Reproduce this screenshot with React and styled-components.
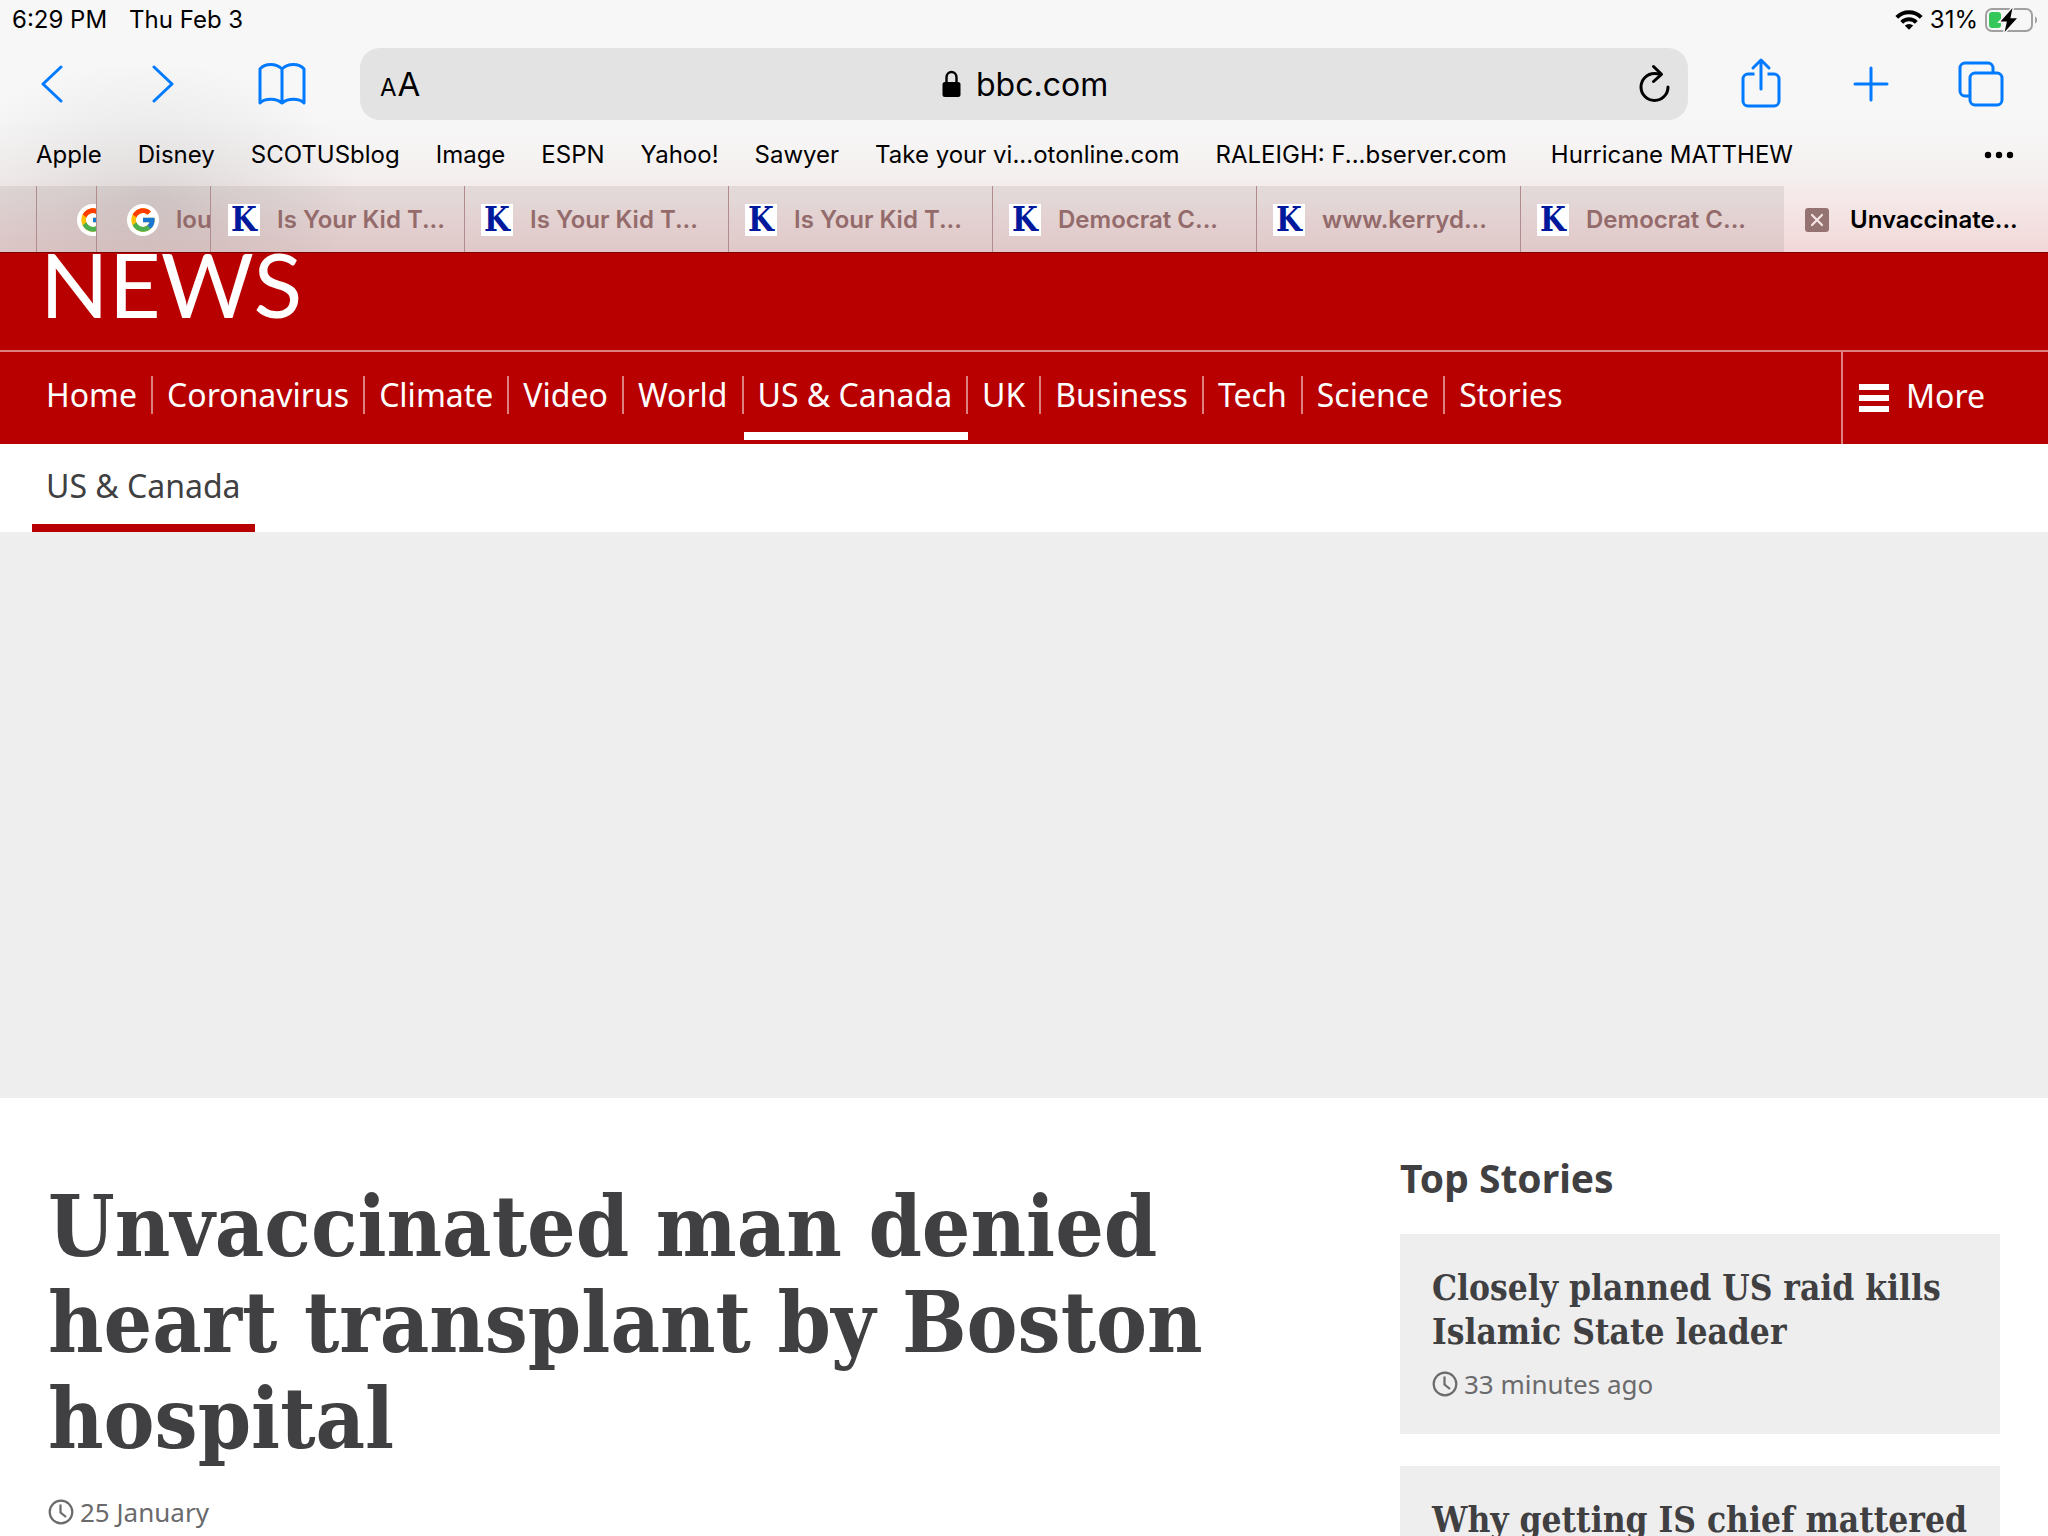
import styled, { createGlobalStyle } from "styled-components";
import { FcGoogle } from "react-icons/fc";

const GlobalStyle = createGlobalStyle`
  * {
    box-sizing: border-box;
  }
  body {
    margin: 0;
    overflow: hidden;
    background: #fff;
    font-family: "Noto Sans", sans-serif;
  }
  button {
    padding: 0;
    border: none;
    background: none;
    color: inherit;
    font: inherit;
    cursor: pointer;
  }
  a {
    color: inherit;
    text-decoration: none;
  }
  svg {
    display: block;
    flex: none;
  }
`;

const Screen = styled.div`
  display: flex;
  flex-direction: column;
  height: 100vh;
  overflow: hidden;
`;

/* ---------- browser chrome ---------- */

const Chrome = styled.header`
  flex: none;
  color: #000;
  font-family: Inter, sans-serif;
  font-size: 24px;
  line-height: 32px;
  background: radial-gradient(
      ellipse 210px 140px at 150px 200px,
      rgba(60, 60, 60, 0.12),
      rgba(60, 60, 60, 0)
    ),
    linear-gradient(
      #f7f7f7 0,
      #f7f7f7 120px,
      #f5f0f0 172px,
      #f5e8e8 200px,
      #f2d8d8 252px
    );
`;

const StatusBar = styled.div`
  display: flex;
  align-items: center;
  justify-content: space-between;
  height: 40px;
  padding: 0 9px 0 12px;
`;

const StatusGroup = styled.div`
  display: flex;
  align-items: center;
  gap: ${(p) => p.$gap}px;
`;

const Toolbar = styled.div`
  display: flex;
  align-items: center;
  padding-top: 8px;
`;

const ToolGroup = styled.div`
  display: flex;
  flex: none;
  padding: ${(p) => (p.$end ? "0 12px 0 18px" : "0 18px 0 0")};
`;

const ToolButton = styled.button`
  display: flex;
  align-items: center;
  justify-content: center;
  width: ${(p) => p.$width || 110}px;
  height: 72px;
  color: #007aff;
`;

const AddressBar = styled.div`
  display: grid;
  grid-template-columns: 1fr auto 1fr;
  align-items: center;
  flex: 1;
  min-width: 0;
  height: 72px;
  padding: 0 16px 0 20px;
  border-radius: 20px;
  background: #e3e3e3;
`;

const TextSizeButton = styled.button`
  display: flex;
  align-items: baseline;
  justify-self: start;
  gap: 1px;
  padding-top: 4px;
  line-height: 40px;
`;

const SmallA = styled.span`
  font-size: 24px;
`;

const LargeA = styled.span`
  font-size: 33px;
`;

const Address = styled.label`
  display: flex;
  align-items: center;
  gap: 15px;
`;

const AddressInput = styled.input`
  width: 134px;
  height: 44px;
  padding: 0;
  border: none;
  outline: none;
  background: none;
  color: #000;
  font-family: Inter, sans-serif;
  font-size: 32px;
`;

const ReloadButton = styled.button`
  justify-self: end;
`;

const Bookmarks = styled.nav`
  display: flex;
  align-items: center;
  height: 66px;
  padding: 4px 34px 0 36px;
`;

const Bookmark = styled.a`
  margin-right: ${(p) => (p.$wide ? 44 : 36)}px;
  white-space: nowrap;
`;

const MoreBookmarks = styled.button`
  margin-left: auto;
`;

const TabStrip = styled.div`
  display: flex;
  height: 66px;
`;

const TabItem = styled.button`
  display: flex;
  align-items: center;
  flex: ${(p) => (p.$width ? "none" : "1 1 264px")};
  width: ${(p) => (p.$width ? `${p.$width}px` : "auto")};
  min-width: 0;
  overflow: hidden;
  gap: ${(p) => (p.$active ? 21 : 17)}px;
  padding-top: 2px;
  padding-left: ${(p) => p.$pad}px;
  border-left: ${(p) => (p.$edge ? "none" : "1px solid #b08c8c")};
  background: ${(p) => (p.$active ? "transparent" : "rgba(60, 40, 40, 0.09)")};
  color: ${(p) => (p.$active ? "#000" : "#946b6b")};
  font-weight: 600;
  white-space: nowrap;
`;

const Favicon = styled.span`
  display: flex;
  align-items: center;
  justify-content: center;
  flex: none;
  width: 32px;
  height: 32px;
  border-radius: ${(p) => (p.$round ? "50%" : "0")};
  background: #fff;
  color: #00189c;
  font: 700 33px/32px "DejaVu Serif Condensed", "DejaVu Serif", serif;
`;

/* ---------- page ---------- */

const Masthead = styled.div`
  flex: none;
  padding: 0 40px;
  height: 98px;
  border-top: 1px solid #800000;
  background: #b80000;
`;

const Brand = styled.a`
  display: block;
  color: #fff;
  font: 400 90px/60px Lato, sans-serif;
`;

const NavBar = styled.nav`
  display: flex;
  flex: none;
  justify-content: space-between;
  height: 94px;
  padding-left: 32px;
  border-top: 2px solid #dc8080;
  background: #b80000;
  color: #fff;
  font-size: 32px;
`;

const NavList = styled.ul`
  display: flex;
  margin: 0;
  padding: 0;
  list-style: none;
`;

const NavLink = styled.a`
  display: block;
  height: 88px;
  padding-top: 24px;
  border-bottom: 8px solid ${(p) => (p.$active ? "#fff" : "transparent")};
`;

const NavLabel = styled.span`
  display: block;
  padding: 0 14px;
  border-right: ${(p) => (p.$last ? "none" : "2px solid #dc8080")};
  line-height: 38px;
  white-space: nowrap;
`;

const MoreButton = styled.button`
  display: flex;
  align-items: center;
  gap: 17px;
  width: 207px;
  padding-left: 16px;
  border-left: 2px solid #dc8080;
`;

const MoreLabel = styled.span`
  padding-bottom: 4px;
  line-height: 40px;
`;

const SubNav = styled.nav`
  display: flex;
  flex: none;
  padding-left: 32px;
`;

const SubNavLink = styled.a`
  padding: 4px 14px 0;
  border-bottom: 8px solid #b80000;
  color: #404042;
  font-size: 32px;
  line-height: 76px;
`;

const AdSlot = styled.div`
  flex: none;
  height: 566px;
  background: #eee;
`;

const Content = styled.main`
  display: grid;
  grid-template-columns: 1fr 600px;
  column-gap: 152px;
  padding: 0 48px;
  color: #404042;
`;

const Article = styled.article`
  padding-top: 80px;
`;

const Headline = styled.h1`
  margin: 0 0 30px;
  font: 700 85px/96px "DejaVu Serif Condensed", "DejaVu Serif", serif;
`;

const Time = styled.div`
  display: flex;
  align-items: center;
  gap: 6px;
  color: #6a6a6c;
  font-size: 26px;
  line-height: 32px;
`;

const Sidebar = styled.aside`
  display: flex;
  flex-direction: column;
  gap: 32px;
  padding-top: 56px;
`;

const SidebarTitle = styled.h2`
  margin: 0;
  font-size: 39px;
  line-height: 48px;
`;

const StoryCard = styled.a`
  display: block;
  padding: 32px 32px 34px;
  background: #eee;
`;

const StoryTitle = styled.h3`
  margin: 0 0 14px;
  font: 700 35px/44px "DejaVu Serif Condensed", "DejaVu Serif", serif;
`;

const bookmarks = [
  "Apple",
  "Disney",
  "SCOTUSblog",
  "Image",
  "ESPN",
  "Yahoo!",
  "Sawyer",
  "Take your vi...otonline.com",
  "RALEIGH: F...bserver.com",
  "Hurricane MATTHEW",
];

const tabs = [
  { width: 36, pad: 0, edge: true },
  { width: 60, pad: 40, icon: "google" },
  { width: 114, pad: 30, icon: "google", title: "lou" },
  { width: 254, pad: 17, icon: "k", title: "Is Your Kid T..." },
  { pad: 16, icon: "k", title: "Is Your Kid T..." },
  { pad: 16, icon: "k", title: "Is Your Kid T..." },
  { pad: 16, icon: "k", title: "Democrat C..." },
  { pad: 16, icon: "k", title: "www.kerryd..." },
  { pad: 16, icon: "k", title: "Democrat C..." },
  { pad: 21, active: true, edge: true, title: "Unvaccinate..." },
];

const sections = [
  "Home",
  "Coronavirus",
  "Climate",
  "Video",
  "World",
  "US & Canada",
  "UK",
  "Business",
  "Tech",
  "Science",
  "Stories",
];

const line = {
  fill: "none",
  stroke: "currentColor",
  strokeWidth: 3,
  strokeLinecap: "round",
  strokeLinejoin: "round",
};

function WifiIcon() {
  return (
    <svg width="28" height="20" viewBox="0 0 28 20" aria-hidden="true">
      <g fill="none" stroke="#000" strokeWidth="4">
        <path d="M1.8 7.4a17.3 17.3 0 0 1 24.4 0" />
        <path d="M6.7 12.4a10.3 10.3 0 0 1 14.6 0" />
      </g>
      <path d="M14 19.8 9.8 15.6a6 6 0 0 1 8.4 0z" />
    </svg>
  );
}

function BatteryIcon() {
  return (
    <svg width="54" height="26" viewBox="0 0 54 26" aria-hidden="true">
      <rect x="1" y="2" width="46" height="22" rx="6" fill="none" stroke="#a0a0a0" strokeWidth="2" />
      <path d="M50 9.5c2.8 1 2.8 6 0 7z" fill="#a0a0a0" />
      <rect x="4" y="5" width="12" height="16" rx="3" fill="#34c759" />
      <path
        d="M27.5 1 15.5 14.6h6.4L19.6 25 32 11.2h-6.6z"
        fill="#000"
        stroke="#f7f7f7"
        strokeWidth="3"
        paintOrder="stroke"
      />
    </svg>
  );
}

function BookIcon() {
  return (
    <svg width="48" height="44" viewBox="0 0 48 44" aria-hidden="true">
      <path {...line} d="M24 7C18 1 7 1 2 7V41c5-5 16-5 22 0 6-5 17-5 22 0V7C41 1 30 1 24 7V41" />
    </svg>
  );
}

function LockIcon() {
  return (
    <svg width="19" height="28" viewBox="0 0 19 28" aria-hidden="true">
      <path d="M4.5 14V7.5a5 5.5 0 0 1 10 0V14" fill="none" stroke="#000" strokeWidth="2.4" />
      <rect x="0.5" y="12" width="18" height="15" rx="2.5" />
    </svg>
  );
}

function ReloadIcon() {
  return (
    <svg width="34" height="40" viewBox="0 0 34 40" aria-hidden="true">
      <path {...line} d="M30 23a13.5 13.5 0 1 1-13.5-13.5c2 0 3.5.2 6 .8" />
      <path {...line} d="M15.5 2.5 23.5 10.3 15.5 17.5" />
    </svg>
  );
}

function ShareIcon() {
  return (
    <svg width="40" height="54" viewBox="0 0 40 54" aria-hidden="true">
      <path
        {...line}
        strokeLinecap="butt"
        d="M13.5 17H7a5 5 0 0 0-5 5v22a5 5 0 0 0 5 5h26a5 5 0 0 0 5-5V22a5 5 0 0 0-5-5h-6.5"
      />
      <path {...line} d="M20 32V4M12 11 20 3 28 11" />
    </svg>
  );
}

function TabsIcon() {
  return (
    <svg width="46" height="46" viewBox="0 0 46 46" aria-hidden="true">
      <path
        {...line}
        strokeLinecap="butt"
        d="M11.5 35H7a5 5 0 0 1-5-5V7a5 5 0 0 1 5-5h23a5 5 0 0 1 5 5v4.5"
      />
      <rect {...line} x="12" y="12" width="32" height="32" rx="5" />
    </svg>
  );
}

function CloseIcon() {
  return (
    <svg width="24" height="24" viewBox="0 0 24 24" aria-hidden="true">
      <rect width="24" height="24" rx="3" fill="#967373" />
      <path d="M7 7l10 10M17 7 7 17" stroke="#f7e6e6" strokeWidth="2.2" strokeLinecap="round" />
    </svg>
  );
}

function ClockIcon() {
  return (
    <svg width="26" height="26" viewBox="0 0 26 26" aria-hidden="true">
      <g fill="none" stroke="currentColor" strokeWidth="2.2">
        <circle cx="13" cy="13" r="11.3" />
        <path d="M12.5 5.5v8l5.5 4.5" />
      </g>
    </svg>
  );
}

function Tab({ tab }) {
  return (
    <TabItem
      role="tab"
      aria-selected={Boolean(tab.active)}
      $width={tab.width}
      $pad={tab.pad}
      $edge={tab.edge}
      $active={tab.active}
    >
      {tab.icon === "google" && (
        <Favicon $round>
          <FcGoogle size={28} />
        </Favicon>
      )}
      {tab.icon === "k" && <Favicon>K</Favicon>}
      {tab.active && <CloseIcon />}
      {tab.title && <span>{tab.title}</span>}
    </TabItem>
  );
}

function BrowserChrome() {
  return (
    <Chrome>
      <StatusBar>
        <StatusGroup $gap={22}>
          <span>6:29 PM</span>
          <span>Thu Feb 3</span>
        </StatusGroup>
        <StatusGroup $gap={7}>
          <WifiIcon />
          <span>31%</span>
          <BatteryIcon />
        </StatusGroup>
      </StatusBar>

      <Toolbar>
        <ToolGroup>
          <ToolButton $width={104} aria-label="Back">
            <svg width="22" height="38" viewBox="0 0 22 38" aria-hidden="true">
              <path {...line} d="M20 2 2 19l18 17" />
            </svg>
          </ToolButton>
          <ToolButton $width={118} aria-label="Forward">
            <svg width="22" height="38" viewBox="0 0 22 38" aria-hidden="true">
              <path {...line} d="M2 2l18 17L2 36" />
            </svg>
          </ToolButton>
          <ToolButton $width={120} aria-label="Bookmarks">
            <BookIcon />
          </ToolButton>
        </ToolGroup>
        <AddressBar>
          <TextSizeButton aria-label="Text size">
            <SmallA>A</SmallA>
            <LargeA>A</LargeA>
          </TextSizeButton>
          <Address>
            <LockIcon />
            <AddressInput aria-label="Address" defaultValue="bbc.com" />
          </Address>
          <ReloadButton aria-label="Reload">
            <ReloadIcon />
          </ReloadButton>
        </AddressBar>
        <ToolGroup $end>
          <ToolButton aria-label="Share">
            <ShareIcon />
          </ToolButton>
          <ToolButton aria-label="New tab">
            <svg width="36" height="36" viewBox="0 0 36 36" aria-hidden="true">
              <path {...line} d="M18 2v32M2 18h32" />
            </svg>
          </ToolButton>
          <ToolButton aria-label="Show tabs">
            <TabsIcon />
          </ToolButton>
        </ToolGroup>
      </Toolbar>

      <Bookmarks>
        {bookmarks.map((name) => (
          <Bookmark key={name} href="#" $wide={name.startsWith("RALEIGH")}>
            {name}
          </Bookmark>
        ))}
        <MoreBookmarks aria-label="More bookmarks">
          <svg width="30" height="8" viewBox="0 0 30 8" aria-hidden="true">
            <circle cx="4" cy="4" r="3.2" />
            <circle cx="15" cy="4" r="3.2" />
            <circle cx="26" cy="4" r="3.2" />
          </svg>
        </MoreBookmarks>
      </Bookmarks>

      <TabStrip role="tablist">
        {tabs.map((tab, index) => (
          <Tab key={index} tab={tab} />
        ))}
      </TabStrip>
    </Chrome>
  );
}

export default function App() {
  return (
    <Screen>
      <GlobalStyle />
      <BrowserChrome />

      <Masthead>
        <Brand href="#">NEWS</Brand>
      </Masthead>
      <NavBar>
        <NavList>
          {sections.map((name, index) => (
            <li key={name}>
              <NavLink href="#" $active={name === "US & Canada"}>
                <NavLabel $last={index === sections.length - 1}>{name}</NavLabel>
              </NavLink>
            </li>
          ))}
        </NavList>
        <MoreButton>
          <svg width="30" height="28" viewBox="0 0 30 28" aria-hidden="true">
            <path d="M0 0h30v6H0zM0 11h30v6H0zM0 22h30v6H0z" fill="#fff" />
          </svg>
          <MoreLabel>More</MoreLabel>
        </MoreButton>
      </NavBar>
      <SubNav>
        <SubNavLink href="#">US &amp; Canada</SubNavLink>
      </SubNav>
      <AdSlot />

      <Content>
        <Article>
          <Headline>Unvaccinated man denied heart transplant by Boston hospital</Headline>
          <Time>
            <ClockIcon />
            25 January
          </Time>
        </Article>
        <Sidebar>
          <SidebarTitle>Top Stories</SidebarTitle>
          <StoryCard href="#">
            <StoryTitle>Closely planned US raid kills Islamic State leader</StoryTitle>
            <Time>
              <ClockIcon />
              33 minutes ago
            </Time>
          </StoryCard>
          <StoryCard href="#">
            <StoryTitle>Why getting IS chief mattered</StoryTitle>
          </StoryCard>
        </Sidebar>
      </Content>
    </Screen>
  );
}
